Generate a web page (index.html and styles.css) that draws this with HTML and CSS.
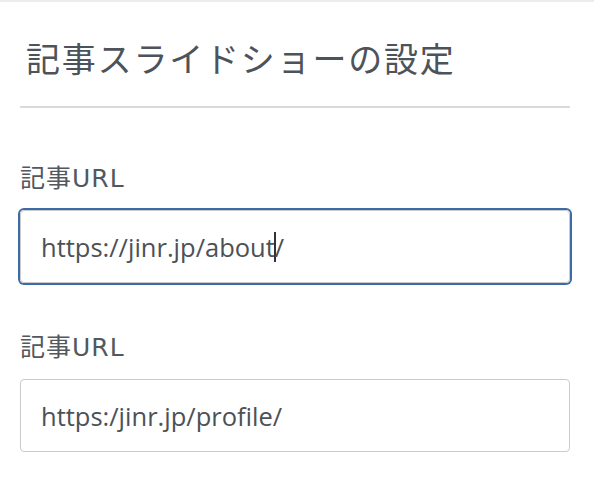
FILE: index.html
```html
<!DOCTYPE html>
<html lang="ja">
<head>
<meta charset="utf-8">
<title>記事スライドショーの設定</title>
<link rel="stylesheet" href="styles.css">
</head>
<body>
<div class="topbar"></div>
<main class="panel">
  <h1 class="title">記事スライドショーの設定</h1>
  <hr class="divider">
  <div class="field first">
    <label class="label">記事URL</label>
    <div class="input focused"><span>https://jinr.jp/about</span><span class="caret"></span><span>/</span></div>
  </div>
  <div class="field">
    <label class="label">記事URL</label>
    <div class="input"><span>https:/jinr.jp/profile/</span></div>
  </div>
</main>
</body>
</html>
```

FILE: styles.css
```css
html, body {
  margin: 0;
  padding: 0;
  background: #ffffff;
}

body {
  font-family: "Open Sans", "Noto Sans CJK JP", sans-serif;
  color: #4f555b;
}

.topbar {
  height: 2px;
  background: #ededed;
}

.panel {
  padding: 0 24px 0 20px;
}

.title {
  margin: 36px 0 0 0;
  padding-left: 6px;
  font-family: "Noto Sans CJK JP", sans-serif;
  font-size: 34px;
  font-weight: 400;
  line-height: 40px;
  letter-spacing: 1.8px;
  color: #4d535a;
}

.divider {
  margin: 28px 0 0 0;
  height: 2px;
  border: 0;
  background: #dadada;
}

.field {
  display: flex;
  flex-direction: column;
  margin-top: 50px;
}

.field.first {
  margin-top: 56px;
}

.label {
  font-family: "DejaVu Sans", "Noto Sans CJK JP", sans-serif;
  font-size: 25px;
  line-height: 30px;
  letter-spacing: 1px;
  margin-bottom: 16px;
  color: #52585e;
}

.input {
  box-sizing: border-box;
  height: 73px;
  display: flex;
  align-items: center;
  padding: 0 20px;
  border: 1px solid #cbcbcb;
  border-radius: 4px;
  font-size: 25.5px;
  color: #4b5157;
  white-space: nowrap;
}

.input.focused {
  box-shadow: 0 0 0 2px #3d6ba6;
}

.caret {
  display: inline-block;
  width: 2px;
  height: 30px;
  margin: 0 -1px;
  background: #2f3338;
}
```
